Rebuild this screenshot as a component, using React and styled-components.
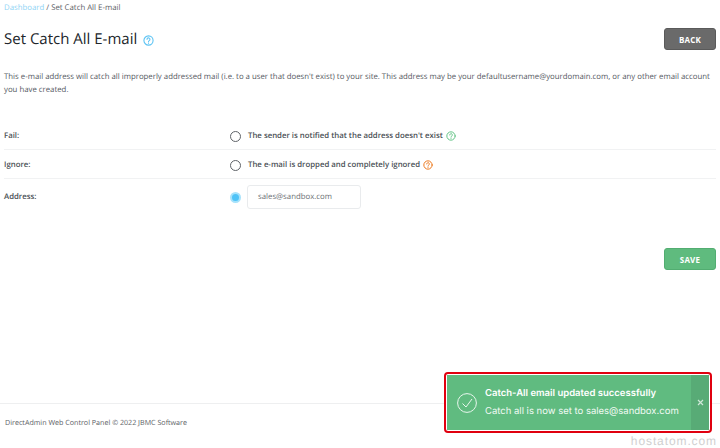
import React from "react";
import styled, { createGlobalStyle } from "styled-components";

const GlobalStyle = createGlobalStyle`
	html, body {
		margin: 0;
		padding: 0;
		background: #fff;
	}
	body {
		font-family: "Open Sans", "Liberation Sans", sans-serif;
		color: #4a4f55;
		text-rendering: geometricPrecision;
	}
`;

const Page = styled.div`
	position: relative;
	width: 720px;
	height: 448px;
	overflow: hidden;
	display: flex;
	flex-direction: column;
`;

const Main = styled.main`
	flex: 1;
	padding: 0 4px;
	display: flex;
	flex-direction: column;
`;

const Breadcrumb = styled.div`
	height: 14px;
	padding-top: 1px;
	line-height: 14px;
	font-size: 7.8px;
	color: #5c6166;
`;

const Crumb = styled.a`
	color: #8fd4f5;
`;

const Header = styled.header`
	display: flex;
	align-items: flex-start;
	justify-content: space-between;
	padding-top: 13px;
	height: 39px;
	box-sizing: content-box;
`;

const Title = styled.h1`
	margin: 0;
	display: flex;
	align-items: center;
	gap: 6px;
	height: 22px;
	font-size: 15px;
	font-weight: 400;
	color: #22262b;

	svg {
		margin-top: 2px;
	}
`;

const Button = styled.button`
	width: 52px;
	height: 22px;
	padding: 0;
	border-radius: 3px;
	border: 1px solid ${p => p.$border};
	background: ${p => p.$bg};
	color: #fff;
	font-family: "Open Sans", "Liberation Sans", sans-serif;
	font-size: 8px;
	font-weight: 700;
	letter-spacing: 0.2px;
`;

const Description = styled.p`
	margin: 0;
	padding-top: 4px;
	font-size: 7.8px;
	line-height: 13px;
	color: #55595f;
`;

const Form = styled.div`
	margin-top: 23px;
`;

const Row = styled.div`
	display: grid;
	grid-template-columns: 226px 1fr;
	align-items: center;
	height: ${p => p.$height}px;
	padding-top: ${p => p.$pad}px;
	border-bottom: ${p => (p.$last ? "none" : "1px solid #f1f2f3")};
`;

const Label = styled.label`
	font-size: 7.8px;
	font-weight: 600;
	color: #4a4f55;
`;

const Option = styled.div`
	display: flex;
	align-items: center;
	font-size: 7.8px;
	font-weight: 600;
	color: #4a4f55;
`;

const Radio = styled.span`
	flex: none;
	box-sizing: border-box;
	width: 11px;
	height: 11px;
	margin-right: 7px;
	border-radius: 50%;
	border: 1px solid #5f6368;
	background: #fff;
	${p => p.$checked && `
		border: 2px solid #a6e2fb;
		background: #4ec3f7;
	`}
`;

const TextInput = styled.div`
	box-sizing: border-box;
	width: 114px;
	height: 24px;
	margin-left: -1px;
	padding-left: 10px;
	display: flex;
	align-items: center;
	border: 1px solid #e9ebed;
	border-radius: 3px;
	font-size: 7.8px;
	font-weight: 400;
	color: #6a6f74;
`;

const Actions = styled.div`
	display: flex;
	justify-content: flex-end;
	margin-top: 34px;
`;

const Footer = styled.footer`
	height: 44px;
	padding-left: 5px;
	border-top: 1px solid #eeeff0;
	display: flex;
	align-items: flex-start;
	font-size: 7.15px;
	line-height: 38px;
	color: #5c6166;
`;

const ToastFrame = styled.div`
	position: absolute;
	left: 444px;
	top: 372px;
	width: 268px;
	height: 61px;
	box-sizing: border-box;
	border: 2px solid #e0000f;
	border-radius: 4px;
	padding: 1px;
	background: #fff;
`;

const Toast = styled.div`
	height: 100%;
	display: flex;
	background: #60bb80;
	color: #fff;
`;

const ToastIcon = styled.div`
	flex: none;
	width: 38px;
	display: flex;
	align-items: center;
	padding-left: 10px;
	box-sizing: border-box;
`;

const ToastBody = styled.div`
	flex: 1;
	padding-top: 12px;
	font-family: Inter, "Open Sans", sans-serif;
`;

const ToastTitle = styled.div`
	font-size: 9.5px;
	font-weight: 600;
	line-height: 14px;
`;

const ToastText = styled.div`
	margin-top: 5px;
	font-size: 9.5px;
	line-height: 12px;
	color: #f1faf4;
`;

const ToastClose = styled.div`
	width: 18px;
	display: flex;
	align-items: center;
	justify-content: center;
	background: #58ab76;
	color: #cfe8d8;
`;

const Watermark = styled.div`
	position: absolute;
	right: 3px;
	bottom: 0;
	font-family: "Liberation Sans", sans-serif;
	font-size: 12px;
	letter-spacing: 0.9px;
	color: #d0d0d0;
`;

const Help = ({color, size = 11}) => (
	<svg width={size} height={size} viewBox="0 0 24 24" fill="none" stroke={color} strokeWidth="2.4" strokeLinecap="round" style={{flex: "none"}}>
		<circle cx="12" cy="12" r="10"/>
		<path d="M8.8 9.5a3.2 3.2 0 1 1 4.8 2.8c-1 .6-1.6 1.2-1.6 2.4"/>
		<path d="M12 17.6v.2"/>
	</svg>
);

const Spaced = styled.span`
	display: inline-flex;
	margin-left: 3px;
`;

const App = () => (
	<Page>
		<GlobalStyle/>
		<Main>
			<Breadcrumb><Crumb>Dashboard</Crumb> / Set Catch All E-mail</Breadcrumb>
			<Header>
				<Title>Set Catch All E-mail <Help color="#5cc3f3" size={11}/></Title>
				<Button $bg="#6a6a6a" $border="#5a5a5a">BACK</Button>
			</Header>
			<Description>
				This e-mail address will catch all improperly addressed mail (i.e. to a user that doesn't exist) to your site. This address may be your defaultusername@yourdomain.com, or any other email account you have created.
			</Description>
			<Form>
				<Row $height={26} $pad={3}>
					<Label>Fail:</Label>
					<Option>
						<Radio/>The sender is notified that the address doesn't exist
						<Spaced><Help color="#63c487" size={10}/></Spaced>
					</Option>
				</Row>
				<Row $height={26} $pad={2}>
					<Label>Ignore:</Label>
					<Option>
						<Radio/>The e-mail is dropped and completely ignored
						<Spaced><Help color="#ec7a1f" size={10}/></Spaced>
					</Option>
				</Row>
				<Row $height={34} $pad={1} $last>
					<Label>Address:</Label>
					<Option>
						<Radio $checked/>
						<TextInput>sales@sandbox.com</TextInput>
					</Option>
				</Row>
			</Form>
			<Actions>
				<Button $bg="#5fbb7e" $border="#52ad71">SAVE</Button>
			</Actions>
		</Main>
		<Footer>DirectAdmin Web Control Panel © 2022 JBMC Software</Footer>
		<ToastFrame>
			<Toast>
				<ToastIcon>
					<svg width="20" height="20" viewBox="0 0 20 20" fill="none" stroke="#e8f6ed" strokeWidth="1">
						<circle cx="10" cy="10" r="9.4"/>
						<path d="M5.5 10.5l3.5 3.5 6-8"/>
					</svg>
				</ToastIcon>
				<ToastBody>
					<ToastTitle>Catch-All email updated successfully</ToastTitle>
					<ToastText>Catch all is now set to sales@sandbox.com</ToastText>
				</ToastBody>
				<ToastClose>
					<svg width="7" height="7" viewBox="0 0 7 7" stroke="currentColor" strokeWidth="1.2"><path d="M1 1l5 5M6 1l-5 5"/></svg>
				</ToastClose>
			</Toast>
		</ToastFrame>
		<Watermark>hostatom.com</Watermark>
	</Page>
);

export default App;
